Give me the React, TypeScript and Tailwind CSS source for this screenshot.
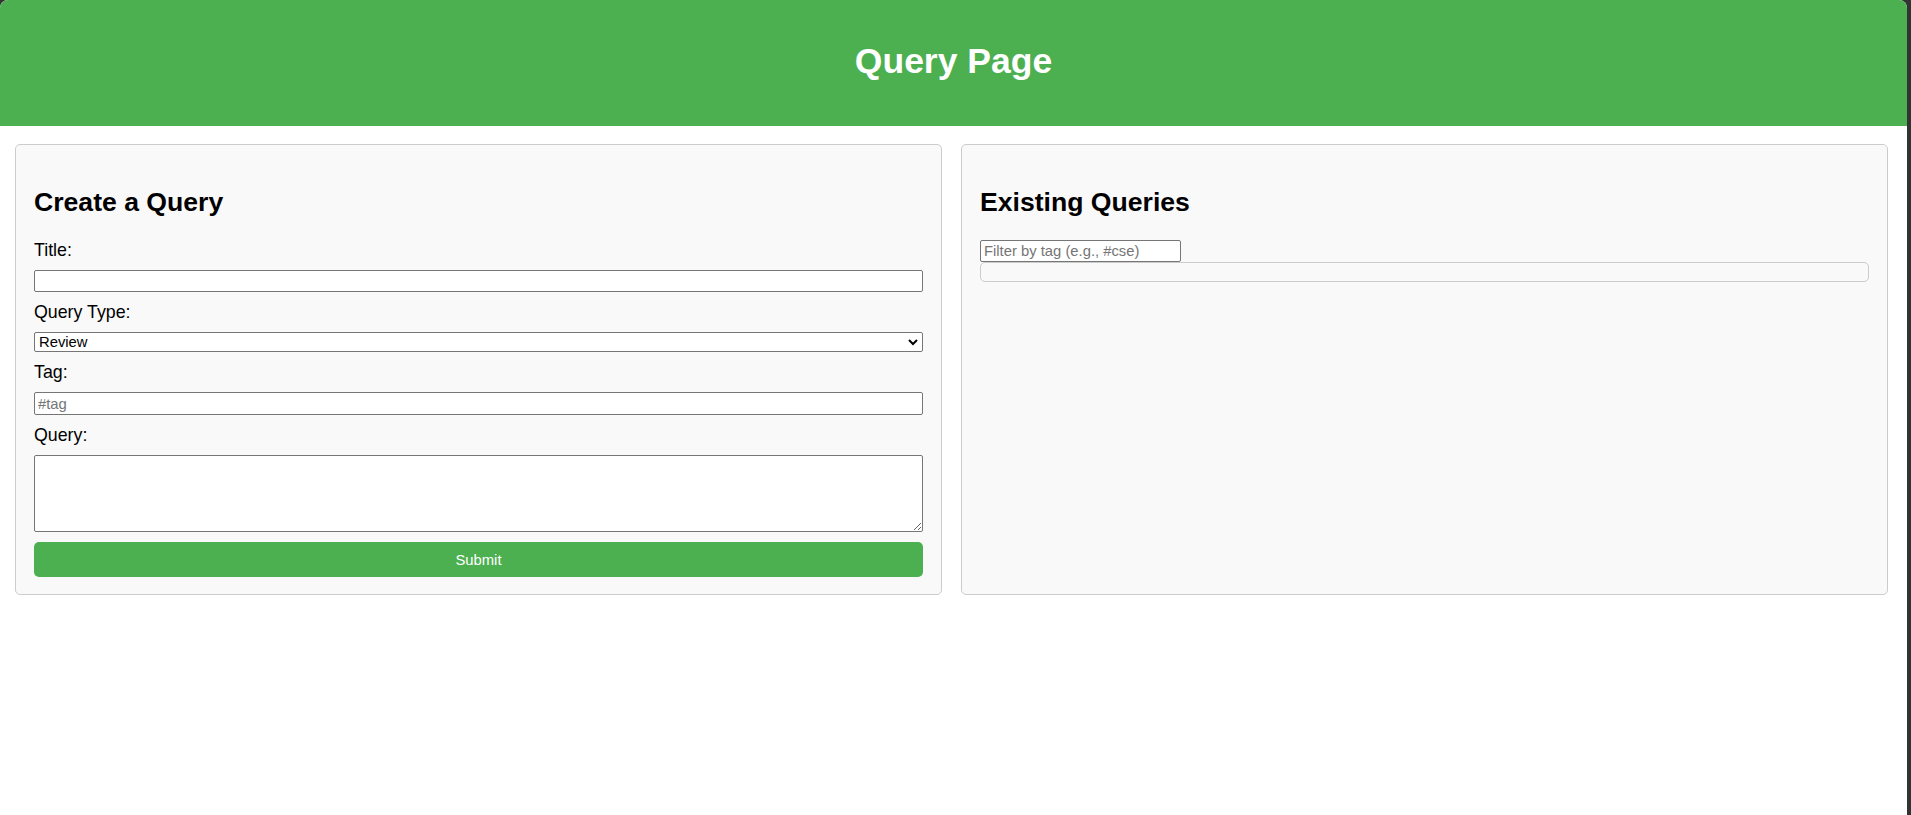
import { useState } from 'react';

// 查询类型选项
const QUERY_TYPES = ['Review', 'Question', 'Feedback'];

interface QueryItem {
  id: number;
  title: string;
  type: string;
  tag: string;
  body: string;
}

/**
 * 查询页面
 * 左侧：创建查询表单；右侧：已有查询列表（按 tag 过滤）
 */
export default function App() {
  const [title, setTitle] = useState('');
  const [queryType, setQueryType] = useState('Review');
  const [tag, setTag] = useState('');
  const [body, setBody] = useState('');
  const [filterTag, setFilterTag] = useState('');
  const [queries, setQueries] = useState<QueryItem[]>([]);

  const handleSubmit = (e: React.FormEvent) => {
    e.preventDefault();
    if (!title.trim()) return;
    setQueries((prev) => [
      ...prev,
      { id: Date.now(), title, type: queryType, tag, body },
    ]);
    setTitle('');
    setTag('');
    setBody('');
  };

  // 按 tag 过滤
  const visible = queries.filter((q) =>
    filterTag ? q.tag.toLowerCase().includes(filterTag.toLowerCase()) : true
  );

  const fieldClass =
    'block w-full bg-white border border-[#767676] rounded-[2px] px-[3px] text-[14.8px] text-black outline-none placeholder:text-[#757575]';

  return (
    <div className="flex h-screen bg-[#333] font-['Liberation_Sans',Arial,sans-serif] text-black">
      <div className="w-[1907px] h-full bg-white rounded-t-[8px] overflow-hidden">
        {/* 顶部标题栏 */}
        <header className="h-[126px] bg-[#4CAF50] pt-[41px] text-center">
          <h1 className="text-[35.5px] leading-[40px] font-bold text-white">Query Page</h1>
        </header>

        <div className="flex gap-[19px] pt-[18px] pl-[15px] pr-[19px]">
          {/* 创建查询 */}
          <section className="flex-1 bg-[#f9f9f9] border border-[#ccc] rounded-[5px] px-[18px] pt-[42px] pb-[17px]">
            <h2 className="text-[26.6px] leading-[30px] font-bold">Create a Query</h2>
            <form onSubmit={handleSubmit} className="flex flex-col gap-[10px] mt-[23px] text-[17.8px] leading-[20px]">
              <label htmlFor="title">Title:</label>
              <input
                id="title"
                value={title}
                onChange={(e) => setTitle(e.target.value)}
                className={`${fieldClass} h-[22px]`}
              />

              <label htmlFor="type">Query Type:</label>
              <div className="relative">
                <select
                  id="type"
                  value={queryType}
                  onChange={(e) => setQueryType(e.target.value)}
                  className={`${fieldClass} h-[20px] appearance-none pl-[4px] leading-[18px]`}
                >
                  {QUERY_TYPES.map((t) => (
                    <option key={t} value={t}>
                      {t}
                    </option>
                  ))}
                </select>
                <svg
                  className="absolute right-[5px] top-[7px] pointer-events-none"
                  width="10"
                  height="7"
                  viewBox="0 0 10 7"
                >
                  <polyline points="1,1 5,5 9,1" fill="none" stroke="#000" strokeWidth="2" />
                </svg>
              </div>

              <label htmlFor="tag">Tag:</label>
              <input
                id="tag"
                value={tag}
                placeholder="#tag"
                onChange={(e) => setTag(e.target.value)}
                className={`${fieldClass} h-[23px]`}
              />

              <label htmlFor="body">Query:</label>
              <textarea
                id="body"
                value={body}
                onChange={(e) => setBody(e.target.value)}
                className={`${fieldClass} h-[77px] resize`}
              />

              <button
                type="submit"
                className="h-[35px] w-full bg-[#4CAF50] text-white text-[14.8px] rounded-[5px] cursor-pointer"
              >
                Submit
              </button>
            </form>
          </section>

          {/* 已有查询 */}
          <section className="flex-1 bg-[#f9f9f9] border border-[#ccc] rounded-[5px] px-[18px] pt-[42px] pb-[17px]">
            <h2 className="text-[26.6px] leading-[30px] font-bold">Existing Queries</h2>
            <input
              value={filterTag}
              placeholder="Filter by tag (e.g., #cse)"
              onChange={(e) => setFilterTag(e.target.value)}
              className="block mt-[23px] w-[201px] h-[22px] bg-white border border-[#767676] rounded-[2px] px-[3px] text-[14.8px] outline-none placeholder:text-[#757575]"
            />
            <div className="min-h-[20px] border border-[#ccc] rounded-[5px] text-[14.8px]">
              {visible.map((q) => (
                <div key={q.id} className="px-[8px] py-[4px] border-b border-[#ddd] last:border-b-0">
                  <strong>{q.title}</strong> <span className="text-[#555]">({q.type})</span>{' '}
                  <span className="text-[#4CAF50]">{q.tag}</span>
                </div>
              ))}
            </div>
          </section>
        </div>
      </div>
    </div>
  );
}
